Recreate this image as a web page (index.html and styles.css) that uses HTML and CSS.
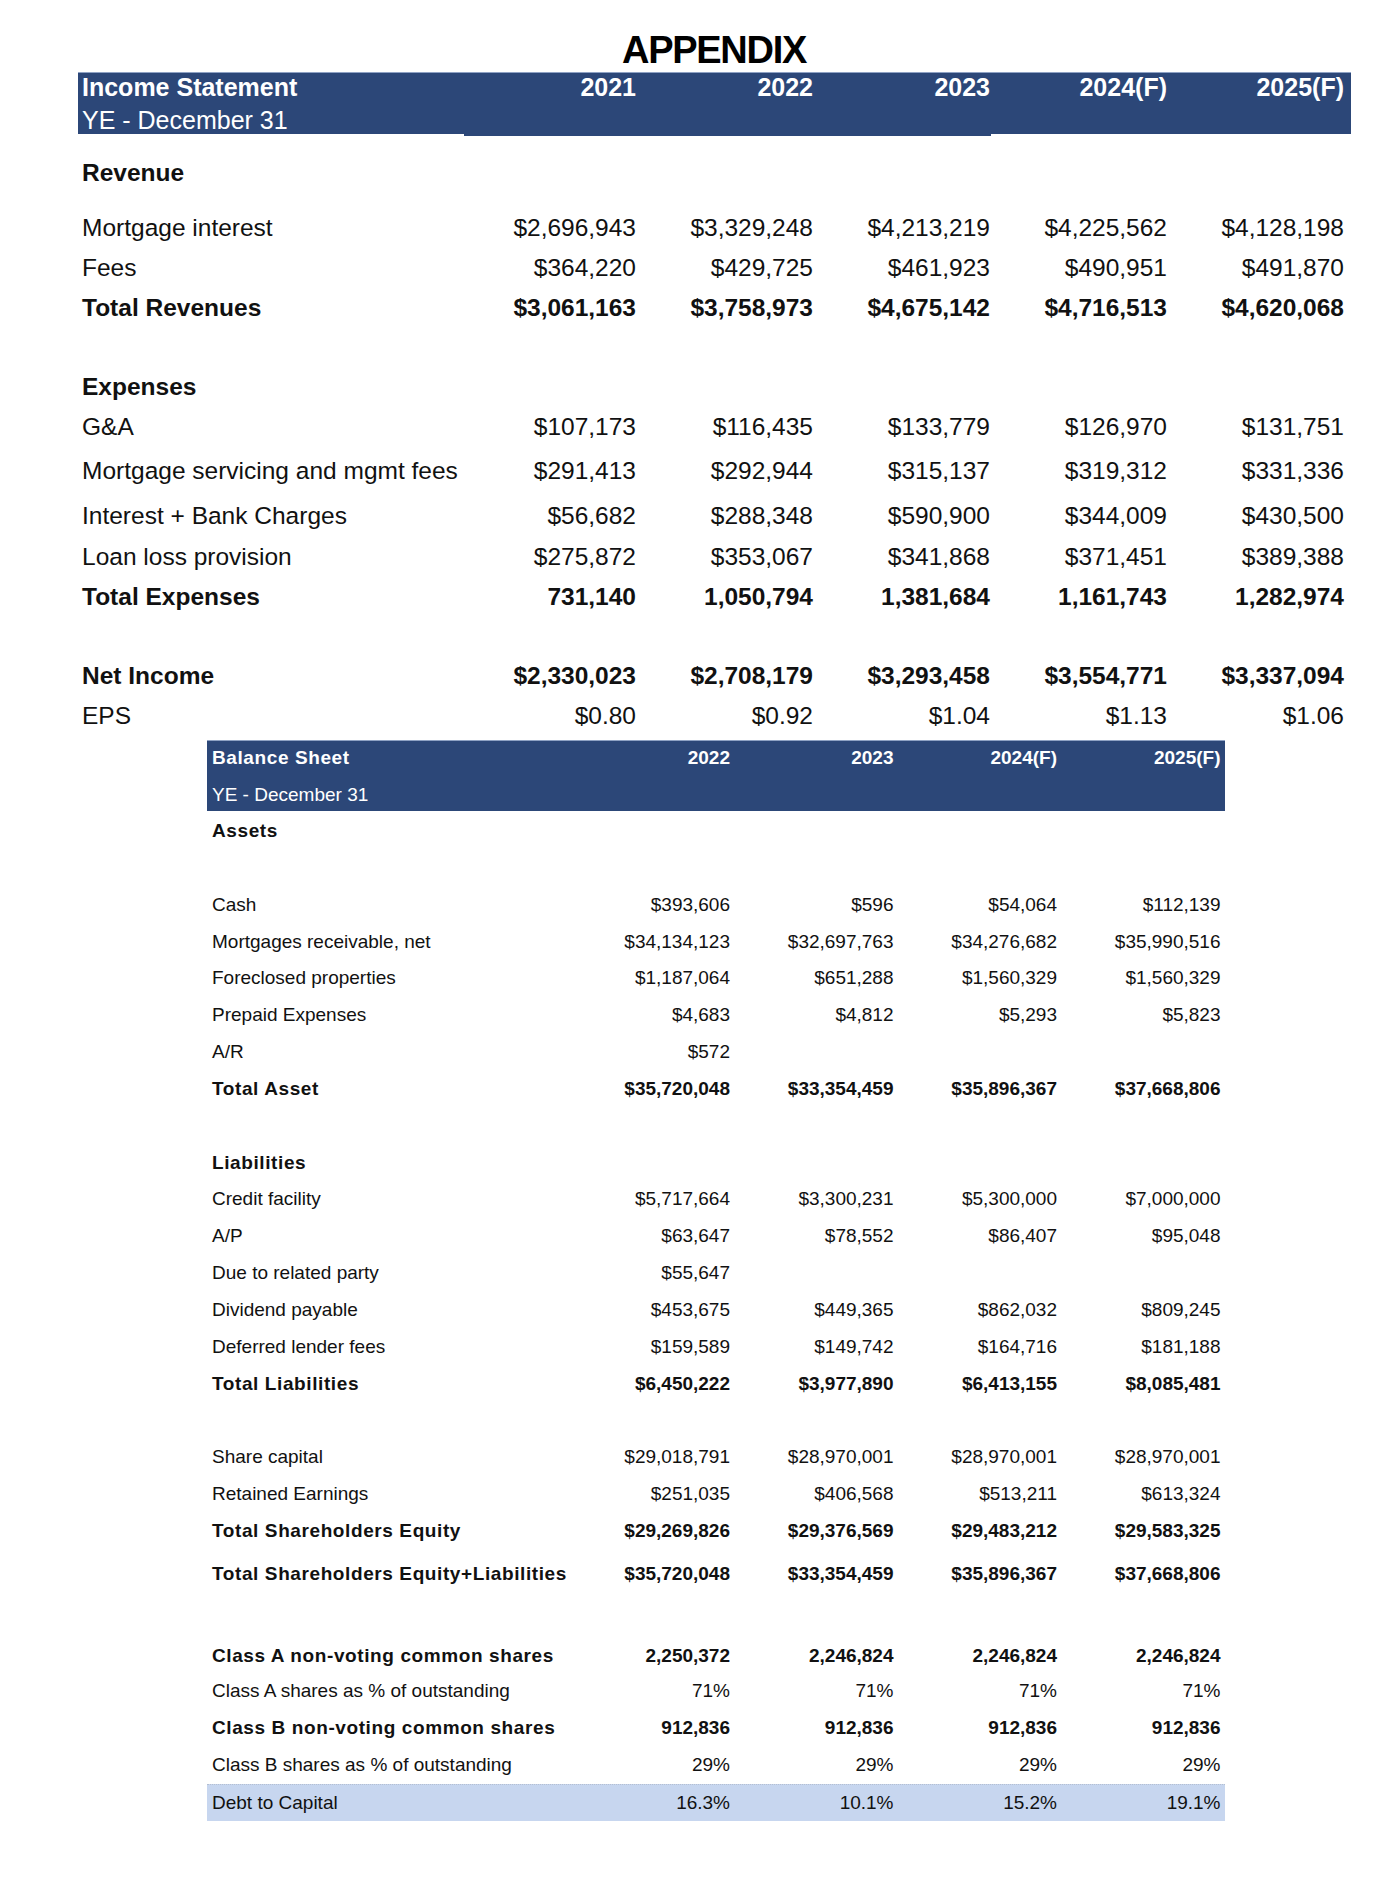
FILE: index.html
```html
<!DOCTYPE html>
<html lang="en">
<head>
<meta charset="utf-8">
<title>Appendix</title>
<link rel="stylesheet" href="styles.css">
</head>
<body>
<div class="page">
  <h1 class="title">APPENDIX</h1>

  <section class="is">
    <div class="is-head">
      <div class="is-row is-head-row">
        <span class="lbl b">Income Statement</span>
        <span class="num b">2021</span><span class="num b">2022</span><span class="num b">2023</span><span class="num b">2024(F)</span><span class="num b">2025(F)</span>
      </div>
      <div class="is-row is-head-row2">
        <span class="lbl">YE - December 31</span>
      </div>
    </div>

    <div class="is-row b is-first is-gap15"><span class="lbl">Revenue</span></div>
    <div class="is-row"><span class="lbl">Mortgage interest</span><span class="num">$2,696,943</span><span class="num">$3,329,248</span><span class="num">$4,213,219</span><span class="num">$4,225,562</span><span class="num">$4,128,198</span></div>
    <div class="is-row"><span class="lbl">Fees</span><span class="num">$364,220</span><span class="num">$429,725</span><span class="num">$461,923</span><span class="num">$490,951</span><span class="num">$491,870</span></div>
    <div class="is-row b is-gap39"><span class="lbl">Total Revenues</span><span class="num">$3,061,163</span><span class="num">$3,758,973</span><span class="num">$4,675,142</span><span class="num">$4,716,513</span><span class="num">$4,620,068</span></div>

    <div class="is-row b"><span class="lbl">Expenses</span></div>
    <div class="is-row is-gap4"><span class="lbl">G&amp;A</span><span class="num">$107,173</span><span class="num">$116,435</span><span class="num">$133,779</span><span class="num">$126,970</span><span class="num">$131,751</span></div>
    <div class="is-row is-gap5"><span class="lbl">Mortgage servicing and mgmt fees</span><span class="num">$291,413</span><span class="num">$292,944</span><span class="num">$315,137</span><span class="num">$319,312</span><span class="num">$331,336</span></div>
    <div class="is-row is-gap1"><span class="lbl">Interest + Bank Charges</span><span class="num">$56,682</span><span class="num">$288,348</span><span class="num">$590,900</span><span class="num">$344,009</span><span class="num">$430,500</span></div>
    <div class="is-row"><span class="lbl">Loan loss provision</span><span class="num">$275,872</span><span class="num">$353,067</span><span class="num">$341,868</span><span class="num">$371,451</span><span class="num">$389,388</span></div>
    <div class="is-row b is-gap39"><span class="lbl">Total Expenses</span><span class="num">731,140</span><span class="num">1,050,794</span><span class="num">1,381,684</span><span class="num">1,161,743</span><span class="num">1,282,974</span></div>

    <div class="is-row b"><span class="lbl">Net Income</span><span class="num">$2,330,023</span><span class="num">$2,708,179</span><span class="num">$3,293,458</span><span class="num">$3,554,771</span><span class="num">$3,337,094</span></div>
    <div class="is-row"><span class="lbl">EPS</span><span class="num">$0.80</span><span class="num">$0.92</span><span class="num">$1.04</span><span class="num">$1.13</span><span class="num">$1.06</span></div>
  </section>

  <section class="bs">
    <div class="bs-head">
      <div class="bs-row bs-head-row b"><span class="lbl">Balance Sheet</span><span class="num">2022</span><span class="num">2023</span><span class="num">2024(F)</span><span class="num">2025(F)</span></div>
      <div class="bs-row bs-head-row2"><span class="lbl">YE - December 31</span></div>
    </div>

    <div class="bs-row b bs-first"><span class="lbl">Assets</span></div>
    <div class="bs-row"></div>
    <div class="bs-row"><span class="lbl">Cash</span><span class="num">$393,606</span><span class="num">$596</span><span class="num">$54,064</span><span class="num">$112,139</span></div>
    <div class="bs-row"><span class="lbl">Mortgages receivable, net</span><span class="num">$34,134,123</span><span class="num">$32,697,763</span><span class="num">$34,276,682</span><span class="num">$35,990,516</span></div>
    <div class="bs-row"><span class="lbl">Foreclosed properties</span><span class="num">$1,187,064</span><span class="num">$651,288</span><span class="num">$1,560,329</span><span class="num">$1,560,329</span></div>
    <div class="bs-row"><span class="lbl">Prepaid Expenses</span><span class="num">$4,683</span><span class="num">$4,812</span><span class="num">$5,293</span><span class="num">$5,823</span></div>
    <div class="bs-row"><span class="lbl">A/R</span><span class="num">$572</span></div>
    <div class="bs-row b"><span class="lbl">Total Asset</span><span class="num">$35,720,048</span><span class="num">$33,354,459</span><span class="num">$35,896,367</span><span class="num">$37,668,806</span></div>
    <div class="bs-row"></div>

    <div class="bs-row b"><span class="lbl">Liabilities</span></div>
    <div class="bs-row"><span class="lbl">Credit facility</span><span class="num">$5,717,664</span><span class="num">$3,300,231</span><span class="num">$5,300,000</span><span class="num">$7,000,000</span></div>
    <div class="bs-row"><span class="lbl">A/P</span><span class="num">$63,647</span><span class="num">$78,552</span><span class="num">$86,407</span><span class="num">$95,048</span></div>
    <div class="bs-row"><span class="lbl">Due to related party</span><span class="num">$55,647</span></div>
    <div class="bs-row"><span class="lbl">Dividend payable</span><span class="num">$453,675</span><span class="num">$449,365</span><span class="num">$862,032</span><span class="num">$809,245</span></div>
    <div class="bs-row"><span class="lbl">Deferred lender fees</span><span class="num">$159,589</span><span class="num">$149,742</span><span class="num">$164,716</span><span class="num">$181,188</span></div>
    <div class="bs-row b"><span class="lbl">Total Liabilities</span><span class="num">$6,450,222</span><span class="num">$3,977,890</span><span class="num">$6,413,155</span><span class="num">$8,085,481</span></div>
    <div class="bs-row"></div>

    <div class="bs-row"><span class="lbl">Share capital</span><span class="num">$29,018,791</span><span class="num">$28,970,001</span><span class="num">$28,970,001</span><span class="num">$28,970,001</span></div>
    <div class="bs-row"><span class="lbl">Retained Earnings</span><span class="num">$251,035</span><span class="num">$406,568</span><span class="num">$513,211</span><span class="num">$613,324</span></div>
    <div class="bs-row b"><span class="lbl">Total Shareholders Equity</span><span class="num">$29,269,826</span><span class="num">$29,376,569</span><span class="num">$29,483,212</span><span class="num">$29,583,325</span></div>
    <div class="bs-row b bs-total-all"><span class="lbl">Total Shareholders Equity+Liabilities</span><span class="num">$35,720,048</span><span class="num">$33,354,459</span><span class="num">$35,896,367</span><span class="num">$37,668,806</span></div>

    <div class="bs-row b bs-shares bs-tight"><span class="lbl">Class A non-voting common shares</span><span class="num">2,250,372</span><span class="num">2,246,824</span><span class="num">2,246,824</span><span class="num">2,246,824</span></div>
    <div class="bs-row bs-tight"><span class="lbl">Class A shares as % of outstanding</span><span class="num">71%</span><span class="num">71%</span><span class="num">71%</span><span class="num">71%</span></div>
    <div class="bs-row b bs-wide"><span class="lbl">Class B non-voting common shares</span><span class="num">912,836</span><span class="num">912,836</span><span class="num">912,836</span><span class="num">912,836</span></div>
    <div class="bs-row bs-wide"><span class="lbl">Class B shares as % of outstanding</span><span class="num">29%</span><span class="num">29%</span><span class="num">29%</span><span class="num">29%</span></div>
    <div class="bs-row bs-debt"><span class="lbl">Debt to Capital</span><span class="num">16.3%</span><span class="num">10.1%</span><span class="num">15.2%</span><span class="num">19.1%</span></div>
  </section>
</div>
</body>
</html>
```

FILE: styles.css
```css
* { box-sizing: border-box; }

html, body {
  margin: 0;
  padding: 0;
  background: #ffffff;
}

body {
  font-family: "Liberation Sans", Arial, sans-serif;
  color: #111111;
}

.page {
  width: 1396px;
  padding-top: 31px;
}

.title {
  margin: 0 0 3px 0;
  padding-left: 32px;
  height: 38px;
  line-height: 38px;
  font-size: 38px;
  font-weight: 700;
  letter-spacing: -1.3px;
  text-align: center;
  color: #000000;
}

.lbl {
  white-space: nowrap;
  text-align: left;
}

.num {
  white-space: nowrap;
  text-align: right;
}

.b { font-weight: 700; }

/* ---------- Income statement ---------- */
.is {
  width: 1273px;
  margin-left: 78px;
  font-size: 24.5px;
}

.is-row {
  display: grid;
  grid-template-columns: 377px repeat(5, 177px);
  padding: 0 7px 0 4px;
  height: 40px;
  line-height: 40px;
}

.is-head {
  position: relative;
  height: 62px;
  background: #2c4778;
  border-top: 1px solid #8fa2c4;
  color: #ffffff;
  font-size: 25px;
}

.is-head::after {
  content: "";
  position: absolute;
  left: 386px;
  top: 61px;
  width: 527px;
  height: 2px;
  background: #2c4778;
}

.is-head-row {
  height: 30px;
  line-height: 29px;
}

.is-head-row2 {
  height: 31px;
  line-height: 35px;
}

.is-first { margin-top: 18.5px; }
.is-gap15 { margin-bottom: 15px; }
.is-gap39 { margin-bottom: 39px; }
.is-gap4 { margin-bottom: 4px; }
.is-gap5 { margin-bottom: 5px; }
.is-gap1 { margin-bottom: 1px; }

/* ---------- Balance sheet ---------- */
.bs {
  width: 1018px;
  margin-left: 207px;
  margin-top: 4.5px;
  font-size: 19px;
}

.bs-row {
  display: grid;
  grid-template-columns: 354.5px repeat(4, 163.5px);
  padding: 0 4.5px 0 5px;
  height: 36.85px;
  line-height: 36.85px;
}

.bs-row.b .lbl { letter-spacing: 0.6px; }

.bs-head {
  height: 71px;
  background: #2c4778;
  border-top: 1px solid #8fa2c4;
  color: #ffffff;
}

.bs-head-row {
  height: 35px;
  line-height: 34px;
}

.bs-head-row2 {
  height: 35px;
  line-height: 38px;
}

.bs-first { margin-top: 2px; }

.bs-total-all { margin-top: 6px; }

.bs-shares { margin-top: 45.15px; }

.bs-tight {
  height: 35.5px;
  line-height: 35.5px;
}

.bs-wide {
  height: 37.5px;
  line-height: 37.5px;
}

.bs-debt {
  background: #c7d6ef;
  border-top: 1px dotted #b4bfd2;
}
```
